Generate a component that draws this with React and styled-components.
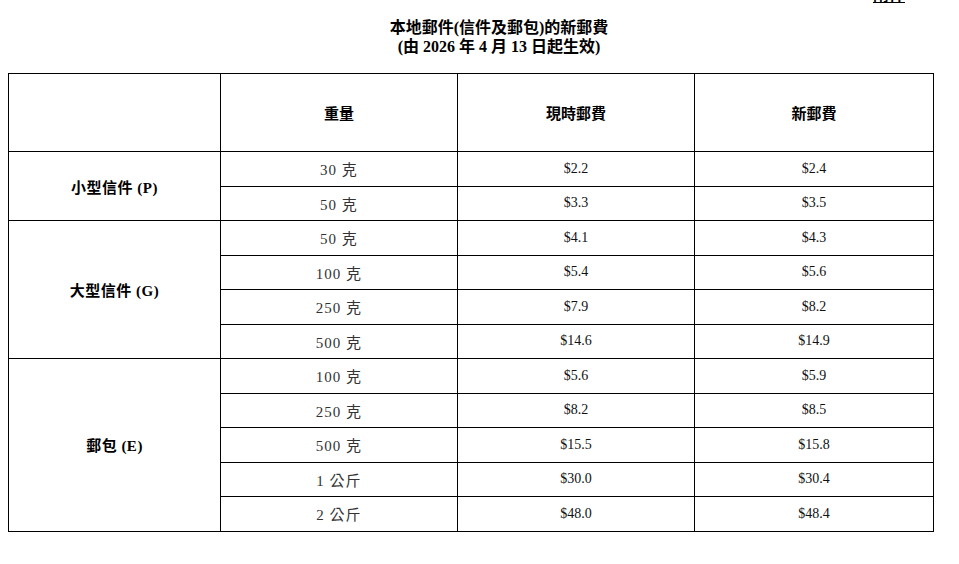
import React from 'react';
import styled, { createGlobalStyle } from 'styled-components';

const GlobalStyle = createGlobalStyle`
  html, body {
    margin: 0;
    padding: 0;
    background: #fff;
  }
  body {
    font-family: "Liberation Serif", "Noto Sans CJK TC", serif;
    color: #000;
  }
`;

const Page = styled.div`
  width: 959px;
  padding: 0 8px;
  box-sizing: border-box;
`;

const TopNote = styled.div`
  height: 5px;
  overflow: hidden;
  display: flex;
  justify-content: flex-end;
  align-items: flex-end;
  padding-right: 46px;

  span {
    font-size: 16px;
    line-height: 18px;
    font-weight: 700;
    text-decoration: underline;
    white-space: nowrap;
  }
`;

const Title = styled.h1`
  margin: 13px 0 0;
  padding-left: 39px;
  text-align: center;
  font-size: 16px;
  line-height: 19px;
  font-weight: 700;
`;

const FeeTable = styled.table`
  margin-top: 17px;
  width: 925px;
  border-collapse: collapse;
  table-layout: fixed;
  font-size: 14px;

  td, th {
    border: 1px solid #000;
    text-align: center;
    vertical-align: middle;
    padding: 0;
  }
`;

const HeadCell = styled.th`
  height: 77px;
  font-weight: 700;
  font-size: 15px;
`;

const Row = styled.tr`
  height: 34.5px;
`;

const GroupCell = styled.td`
  font-weight: 700;
  font-size: 15px;
  letter-spacing: 0.5px;
`;

const WeightCell = styled.td`
  color: #333;
  font-size: 15px;
  letter-spacing: 1px;
`;

const PriceCell = styled.td`
  color: #111;
`;

const groups = [
  {
    name: '小型信件 (P)',
    rows: [
      ['30 克', '$2.2', '$2.4'],
      ['50 克', '$3.3', '$3.5'],
    ],
  },
  {
    name: '大型信件 (G)',
    rows: [
      ['50 克', '$4.1', '$4.3'],
      ['100 克', '$5.4', '$5.6'],
      ['250 克', '$7.9', '$8.2'],
      ['500 克', '$14.6', '$14.9'],
    ],
  },
  {
    name: '郵包 (E)',
    rows: [
      ['100 克', '$5.6', '$5.9'],
      ['250 克', '$8.2', '$8.5'],
      ['500 克', '$15.5', '$15.8'],
      ['1 公斤', '$30.0', '$30.4'],
      ['2 公斤', '$48.0', '$48.4'],
    ],
  },
];

const App = () => (
  <Page>
    <GlobalStyle />
    <TopNote>
      <span>附件</span>
    </TopNote>
    <Title>
      本地郵件(信件及郵包)的新郵費
      <br />
      (由 2026 年 4 月 13 日起生效)
    </Title>
    <FeeTable>
      <colgroup>
        <col style={{ width: 212 }} />
        <col style={{ width: 237 }} />
        <col style={{ width: 237 }} />
        <col style={{ width: 239 }} />
      </colgroup>
      <thead>
        <tr>
          <HeadCell />
          <HeadCell>重量</HeadCell>
          <HeadCell>現時郵費</HeadCell>
          <HeadCell>新郵費</HeadCell>
        </tr>
      </thead>
      <tbody>
        {groups.map((g) =>
          g.rows.map((r, i) => (
            <Row key={g.name + i}>
              {i === 0 && <GroupCell rowSpan={g.rows.length}>{g.name}</GroupCell>}
              <WeightCell>{r[0]}</WeightCell>
              <PriceCell>{r[1]}</PriceCell>
              <PriceCell>{r[2]}</PriceCell>
            </Row>
          ))
        )}
      </tbody>
    </FeeTable>
  </Page>
);

export default App;
